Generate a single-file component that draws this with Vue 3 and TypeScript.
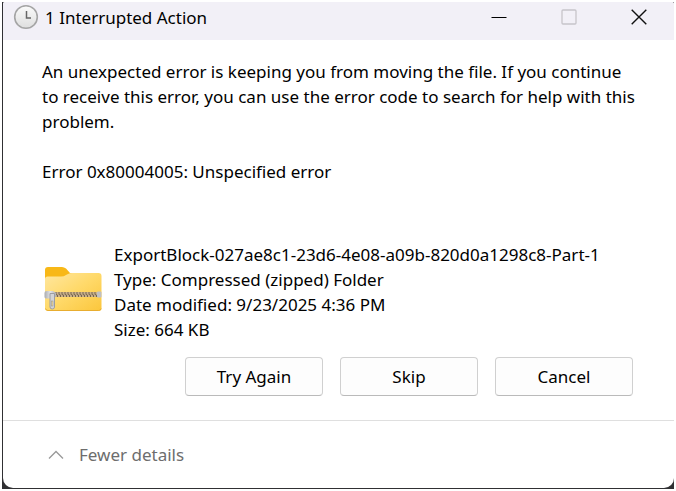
<script setup lang="ts">
import { ref } from 'vue'

interface FileInfo {
  name: string
  type: string
  modified: string
  size: string
}

const file: FileInfo = {
  name: 'ExportBlock-027ae8c1-23d6-4e08-a09b-820d0a1298c8-Part-1',
  type: 'Compressed (zipped) Folder',
  modified: '9/23/2025 4:36 PM',
  size: '664 KB',
}

const actions: string[] = ['Try Again', 'Skip', 'Cancel']
const expanded = ref(true)
const teeth: number[] = Array.from({ length: 14 }, (_, i) => 13 + i * 3)
</script>

<template>
  <div class="backdrop">
    <div class="frame">
      <main class="dialog" role="dialog" aria-labelledby="dialog-title">
        <header class="titlebar">
          <svg class="clock" width="26" height="26" viewBox="0 0 26 26" aria-hidden="true">
            <defs>
              <linearGradient id="clock-face" x1="0" y1="0" x2="0" y2="1">
                <stop offset="0" stop-color="#fbfbfb" />
                <stop offset="1" stop-color="#dedede" />
              </linearGradient>
            </defs>
            <circle cx="13" cy="13" r="11.3" fill="url(#clock-face)" stroke="#a5a5a5" stroke-width="1.6" />
            <path d="M13.5 7v7H18" fill="none" stroke="#666" stroke-width="1.5" />
          </svg>
          <h1 id="dialog-title" class="title">1 Interrupted Action</h1>
          <div class="caption-buttons">
            <button type="button" aria-label="Minimize">
              <svg width="16" height="16" viewBox="0 0 16 16"><path d="M.5 8.5h15" stroke="#000" /></svg>
            </button>
            <button type="button" aria-label="Maximize" disabled>
              <svg width="16" height="16" viewBox="0 0 16 16">
                <rect x="1" y="1" width="14" height="14" rx="1" fill="none" stroke="#c6c4ca" stroke-width="1.3" />
              </svg>
            </button>
            <button type="button" aria-label="Close">
              <svg width="16" height="16" viewBox="0 0 16 16">
                <path d="M.7.7l14.6 14.6M15.3.7L.7 15.3" stroke="#111" stroke-width="1.4" />
              </svg>
            </button>
          </div>
        </header>

        <section class="content">
          <p class="message">
            An unexpected error is keeping you from moving the file. If you continue to receive this
            error, you can use the error code to search for help with this problem.
          </p>
          <p class="message">Error 0x80004005: Unspecified error</p>

          <div v-if="expanded" class="file">
            <svg class="folder" width="60" height="48" viewBox="0 0 60 48" aria-hidden="true">
              <defs>
                <linearGradient id="folder-front" x1="0" y1="0" x2="1" y2="1">
                  <stop offset="0" stop-color="#ffe7a0" />
                  <stop offset=".5" stop-color="#ffd969" />
                  <stop offset="1" stop-color="#fbc63b" />
                </linearGradient>
                <linearGradient id="zip-metal" x1="0" y1="0" x2="1" y2="0">
                  <stop offset="0" stop-color="#a9abaf" />
                  <stop offset=".5" stop-color="#e2e3e6" />
                  <stop offset="1" stop-color="#b0b1b5" />
                </linearGradient>
              </defs>
              <path d="M2 18V5a3 3 0 0 1 3-3h14q2 0 4 1.500l4 4.500h10v10z" fill="#f8b817" />
              <path d="M2 14q0-2.500 2.500-2.500H18q3 0 5-1.500l2-1q2-1 4-1h26.500q3 0 3 3V43q0 3-3 3H5q-3 0-3-3z" fill="url(#folder-front)" />
              <path d="M2.500 43.500q.5 2 2.500 2h50.500q2.500 0 2.700-2" fill="none" stroke="#e8ad30" />
              <path d="M11 29.500h43" stroke="#c9b08a" stroke-width="5" />
              <path
                v-for="x in teeth"
                :key="x"
                :d="`M${x} 27v2.500l1.500 .5v2`"
                fill="none"
                stroke="#75654f"
                stroke-width="1"
              />
              <rect x="54" y="26.500" width="4.500" height="6" rx="1" fill="#bfc0c4" />
              <path d="M1.500 28q0-2 2-2H10l3 2v3.500l-3 2H3.500q-2 0-2-1.500z" fill="url(#zip-metal)" />
              <path d="M7 28.500h4.500V42q0 2-2.250 2T7 42z" fill="#d3d4d7" stroke="#9c9da1" />
              <rect x="8.500" y="36" width="1.500" height="5" fill="#f3d98e" stroke="#8f9094" stroke-width=".5" />
            </svg>
            <ul class="details">
              <li>{{ file.name }}</li>
              <li>Type: {{ file.type }}</li>
              <li>Date modified: {{ file.modified }}</li>
              <li>Size: {{ file.size }}</li>
            </ul>
          </div>

          <div class="actions">
            <button v-for="action in actions" :key="action" type="button">{{ action }}</button>
          </div>
        </section>

        <footer class="footer">
          <button type="button" class="toggle" :aria-expanded="expanded" @click="expanded = !expanded">
            <svg :class="{ flipped: !expanded }" width="16" height="10" viewBox="0 0 16 10" aria-hidden="true">
              <path d="M1 8.500l7-7 7 7" fill="none" stroke="#999" stroke-width="1.300" />
            </svg>
            {{ expanded ? 'Fewer details' : 'More details' }}
          </button>
        </footer>
      </main>
    </div>
  </div>
</template>

<style>
body {
  margin: 0;
  background: #fff;
}
</style>

<style scoped>
.backdrop {
  box-sizing: border-box;
  display: flex;
  min-height: 100vh;
  padding: 2px;
  color: #000;
  font-family: 'Segoe UI', 'Noto Sans', 'Open Sans', sans-serif;
  font-size: 17px;
  line-height: 25px;
}

.frame {
  display: flex;
  flex: 1;
  min-width: 0;
  padding: 0 0 1px 1px;
  background: #303033;
}

.dialog {
  display: flex;
  flex: 1;
  flex-direction: column;
  min-width: 0;
  border-radius: 2px 2px 10px 10px;
  background: #fff;
  overflow: hidden;
}

.titlebar {
  display: flex;
  align-items: center;
  height: 38px;
  padding-left: 10px;
  background: #f2f0f7;
}

.clock {
  margin-bottom: 8px;
}

.title {
  flex: 1;
  margin: 0 0 8px 6px;
  font-size: 17px;
  font-weight: 400;
}

.caption-buttons {
  display: flex;
  margin-bottom: 8px;
}

.caption-buttons button {
  display: flex;
  align-items: center;
  justify-content: center;
  width: 70px;
  height: 30px;
  padding: 0;
  border: 0;
  background: none;
}

button {
  color: inherit;
  font: inherit;
}

.content {
  flex: 1;
  padding: 19px 32px 24px 39px;
}

.message {
  margin: 0 0 25px;
}

.file {
  display: flex;
  gap: 11px;
  margin-top: 58px;
}

.folder {
  flex: none;
  margin: 23px 0 0 1px;
}

.details {
  margin: 0;
  padding: 0;
  list-style: none;
}

.actions {
  display: flex;
  justify-content: flex-end;
  gap: 17px;
  margin-top: 15px;
  padding-right: 9px;
}

.actions button {
  width: 138px;
  height: 39px;
  padding: 0;
  border: 1px solid #d0d0d0;
  border-bottom-color: #bababa;
  border-radius: 4px;
  background: #fdfdfd;
}

.footer {
  display: flex;
  align-items: center;
  height: 67px;
  padding-left: 45px;
  border-top: 1px solid #dfdfdf;
}

.toggle {
  display: flex;
  align-items: center;
  gap: 15px;
  padding: 0;
  border: 0;
  background: none;
  color: #6d6d6d;
}

.flipped {
  transform: rotate(180deg);
}
</style>
